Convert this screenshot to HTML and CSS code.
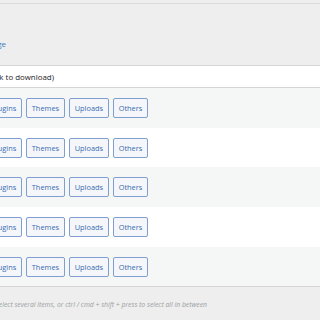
FILE: index.html
```html
<!DOCTYPE html>
<html>
<head>
<meta charset="utf-8">
<link rel="stylesheet" href="styles.css">
</head>
<body>
<div class="page">
  <div class="topbar"></div>
  <div class="panel">
    <div class="clip link-clip"><a class="link" href="#">Manage</a></div>
  </div>
  <div class="table">
    <div class="thead"><div class="clip head-clip"><span>Backup data (click to download)</span></div></div>
    <div class="row alt">
      <div class="btns"><div class="clip first"><span class="btn">Plugins</span></div><span class="btn">Themes</span><span class="btn">Uploads</span><span class="btn">Others</span></div>
    </div>
    <div class="row">
      <div class="btns"><div class="clip first"><span class="btn">Plugins</span></div><span class="btn">Themes</span><span class="btn">Uploads</span><span class="btn">Others</span></div>
    </div>
    <div class="row alt">
      <div class="btns"><div class="clip first"><span class="btn">Plugins</span></div><span class="btn">Themes</span><span class="btn">Uploads</span><span class="btn">Others</span></div>
    </div>
    <div class="row">
      <div class="btns"><div class="clip first"><span class="btn">Plugins</span></div><span class="btn">Themes</span><span class="btn">Uploads</span><span class="btn">Others</span></div>
    </div>
    <div class="row alt">
      <div class="btns"><div class="clip first"><span class="btn">Plugins</span></div><span class="btn">Themes</span><span class="btn">Uploads</span><span class="btn">Others</span></div>
    </div>
  </div>
  <div class="hint"><div class="clip hint-clip"><span>Press shift to select several items, or ctrl / cmd + shift + press to select all in between</span></div></div>
</div>
</body>
</html>
```

FILE: styles.css
```css
html, body {
  margin: 0;
  padding: 0;
  background: #eeeeee;
  font-family: "Open Sans", "Noto Sans", sans-serif;
  overflow: hidden;
}
.page {
  width: 320px;
  height: 320px;
  overflow: hidden;
  background: #eeeeee;
}
.clip {
  display: flex;
  justify-content: flex-end;
  flex-shrink: 0;
  white-space: nowrap;
}
.topbar {
  height: 3px;
  border-bottom: 1px solid #dcdcde;
}
.panel {
  height: 62px;
  border-bottom: 1px solid #d5d5d7;
  display: flex;
  align-items: flex-end;
  box-sizing: border-box;
  padding: 0 0 16px 0;
}
.link-clip {
  width: 6px;
}
.link {
  color: #3b7cbd;
  font-size: 8px;
  text-decoration: none;
  line-height: 10px;
}
.table {
  background: #fff;
}
.thead {
  height: 21px;
  display: flex;
  align-items: center;
  border-bottom: 1px solid #d5d5d7;
  font-size: 7.9px;
  color: #1d2327;
  background: #fff;
}
.head-clip {
  width: 54px;
}
.row {
  height: 39.7px;
  display: flex;
  align-items: center;
  background: #fff;
}
.row.alt {
  background: #f5f6f6;
}
.row:last-child {
  border-bottom: 1px solid #d5d5d7;
}
.btns {
  display: flex;
  gap: 4px;
}
.first {
  width: 22px;
}
.btn {
  display: inline-flex;
  align-items: center;
  height: 20px;
  box-sizing: border-box;
  padding: 0 4.8px;
  border: 1px solid #7f9fd0;
  border-radius: 2px;
  background: #f4f6f9;
  color: #3a6db2;
  font-size: 7.4px;
  white-space: nowrap;
}
.hint {
  display: flex;
  margin-top: 13px;
  font-size: 6.8px;
  font-style: italic;
  color: #9a9ea3;
}
.hint-clip {
  width: 207px;
}
```
